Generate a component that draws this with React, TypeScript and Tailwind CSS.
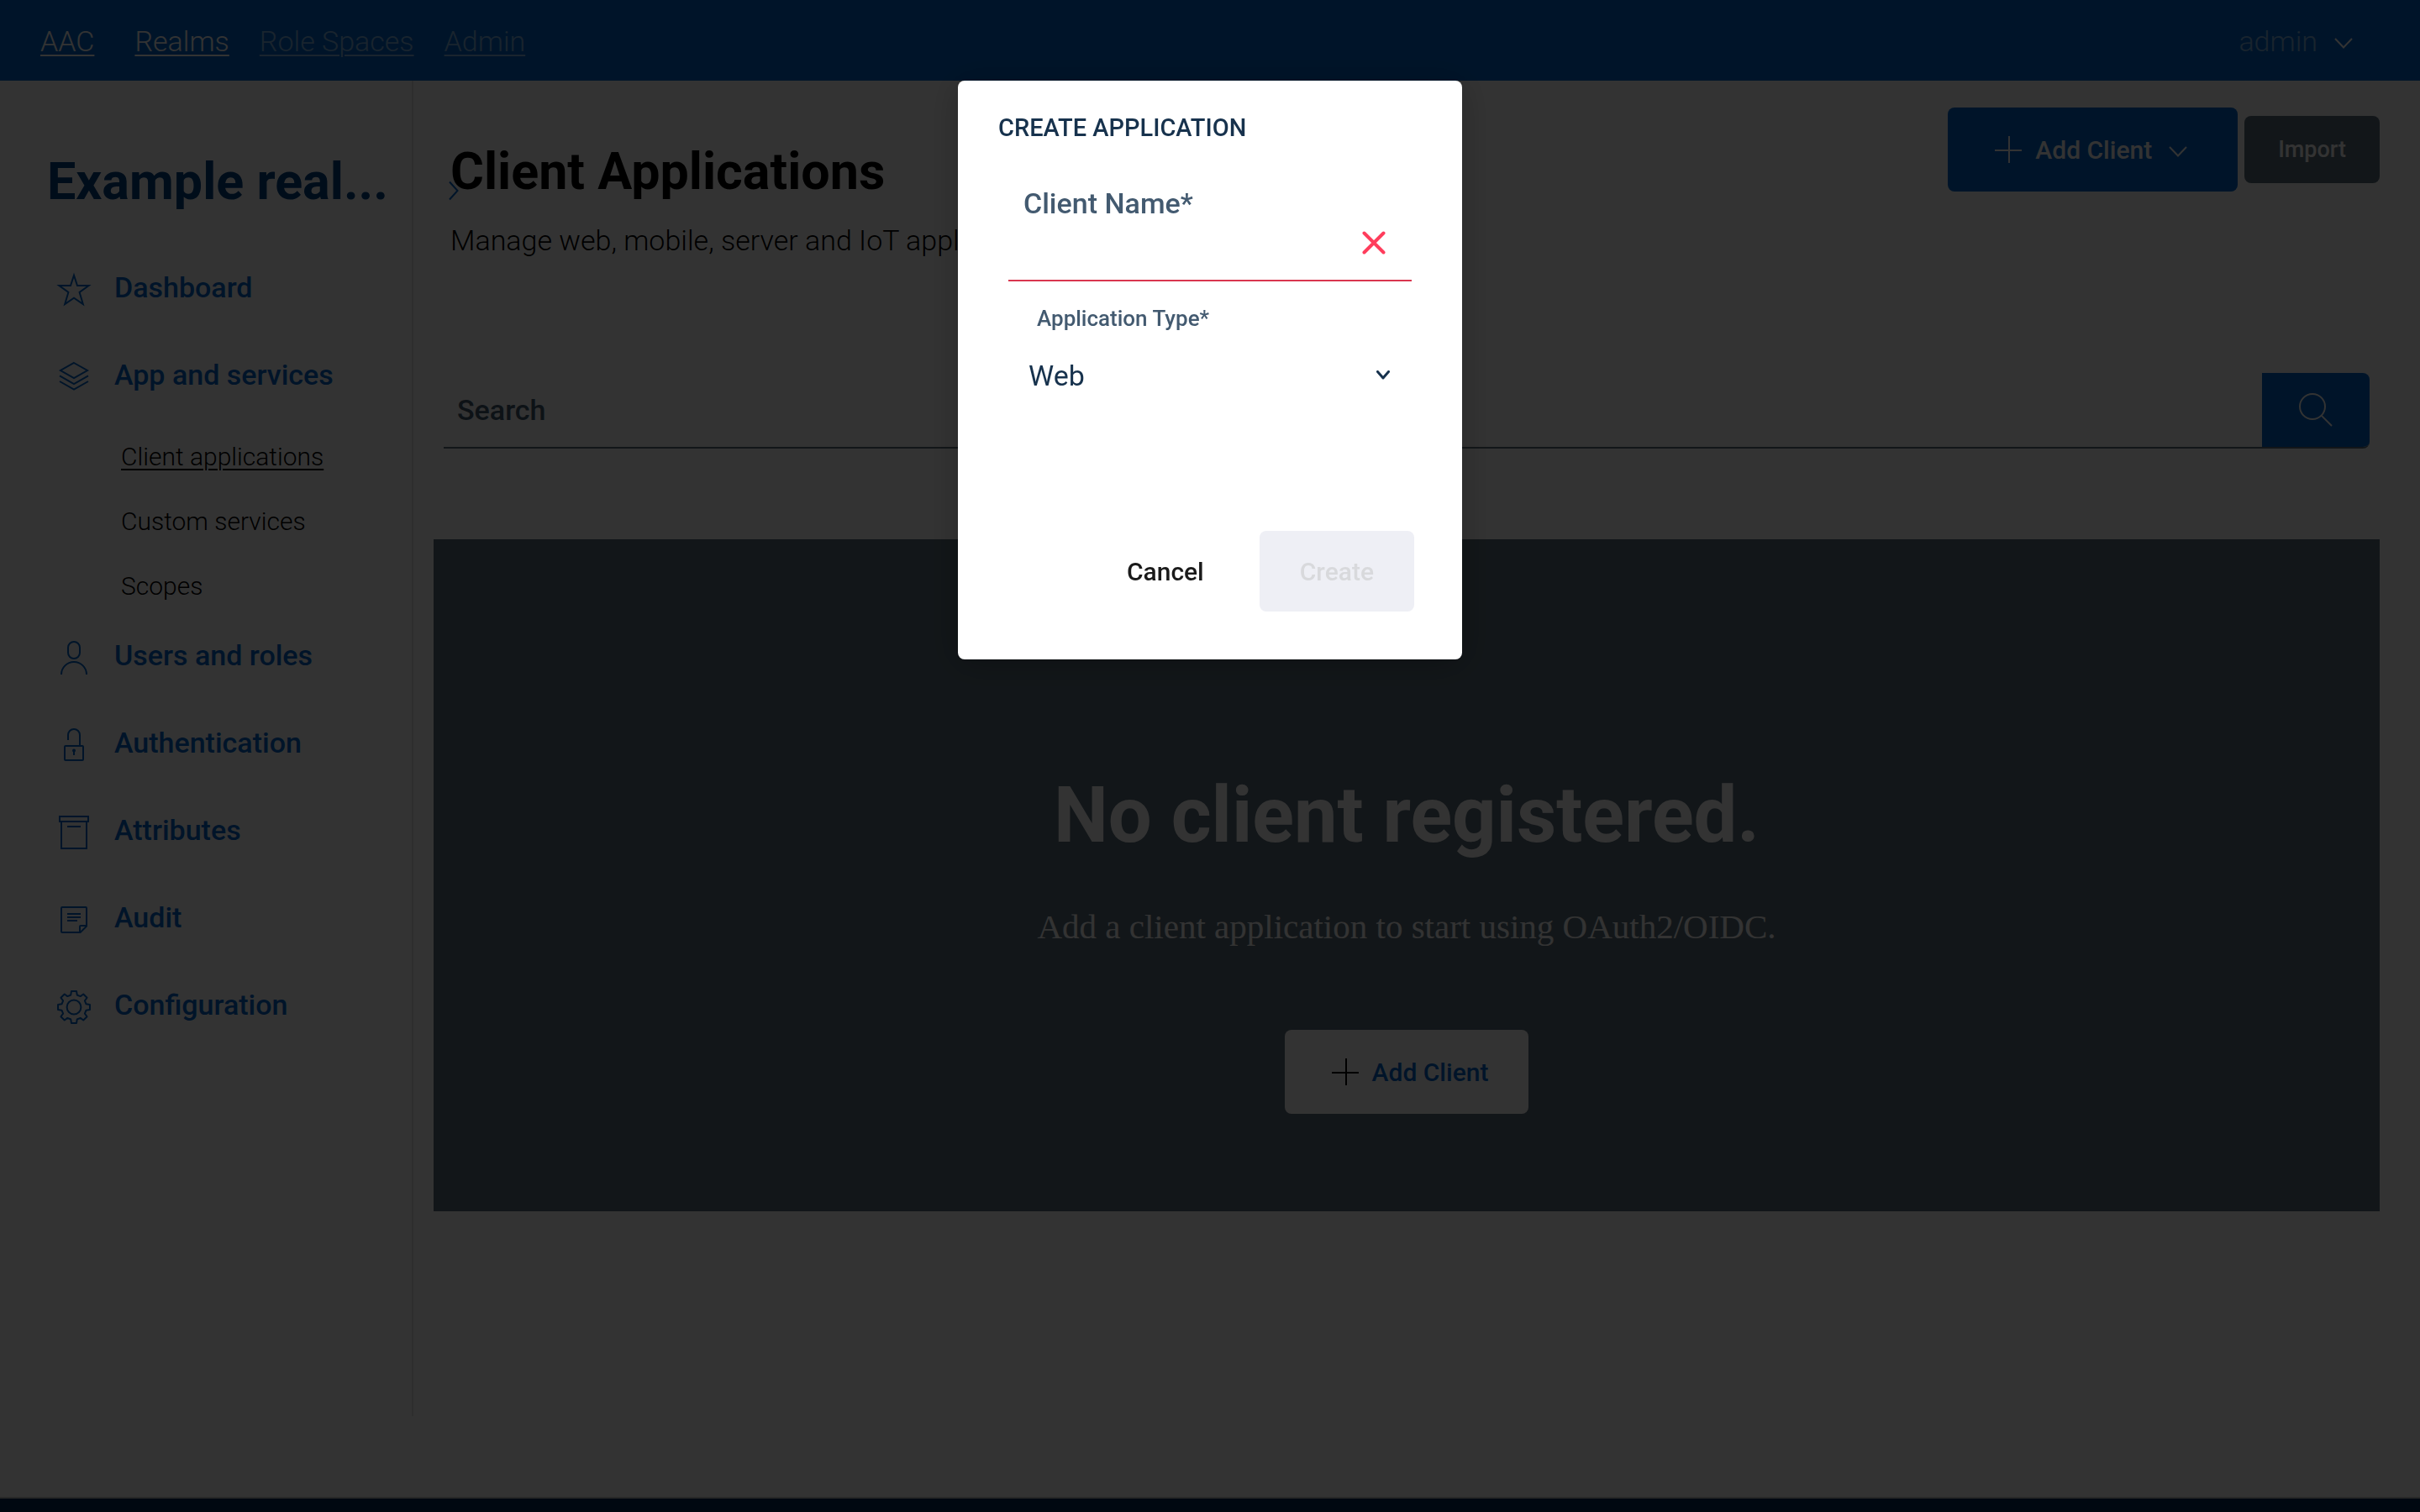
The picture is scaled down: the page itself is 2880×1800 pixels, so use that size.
import type { ReactNode } from "react";

const cn = (...parts: string[]) => parts.join(" ");

function Icon({ className = "", stroke = 1, children }: { className?: string; stroke?: number; children: ReactNode }) {
  return (
    <svg
      viewBox="0 0 24 24"
      fill="none"
      stroke="currentColor"
      strokeWidth={stroke}
      aria-hidden="true"
      className={cn("size-12 shrink-0", className)}
    >
      {children}
    </svg>
  );
}

/* Eight-toothed gear outline centred on 12,12. */
function gearPath() {
  const pts: string[] = [];
  const at = (r: number, a: number) => `${(12 + r * Math.sin(a)).toFixed(2)} ${(12 - r * Math.cos(a)).toFixed(2)}`;
  for (let k = 0; k < 8; k++) {
    const a = (k * Math.PI) / 4;
    pts.push(at(7.5, a - 0.25), at(9.6, a - 0.16), at(9.6, a + 0.16), at(7.5, a + 0.25));
  }
  return `M${pts.join("L")}Z`;
}

const StarIcon = () => (
  <Icon className="mt-1.5">
    <path d="M12 3.4 14 9.5h6.8l-5.5 4 2.1 7L12 16.8l-5.4 3.7 2.1-7-5.5-4H10Z" />
  </Icon>
);
const LayersIcon = () => (
  <Icon className="mt-1.5">
    <path d="M12 3.5 20 8l-8 4.5L4 8Z M3.5 11.2 12 16l8.5-4.8 M3.5 14.5 12 19.3l8.5-4.8" />
  </Icon>
);
const UserIcon = () => (
  <Icon className="mt-1.5">
    <rect x="8.5" y="2.5" width="7" height="10" rx="3.5" />
    <path d="M4.5 22a7.5 7.5 0 0 1 15 0" />
  </Icon>
);
const LockIcon = () => (
  <Icon className="mt-1.5">
    <path d="M8.5 9V6a3.5 3.5 0 0 1 7 0v6.5" />
    <rect x="6.5" y="12.5" width="11" height="8.5" rx=".5" />
    <path d="M12 15v3" />
    <circle cx="12" cy="15.3" r="1" fill="currentColor" stroke="none" />
  </Icon>
);
const BoxIcon = () => (
  <Icon className="mt-1.5">
    <path d="M3.5 2.5h17v3h-17Z M4.5 5.5v16h15v-16 M8 8.5h8" />
  </Icon>
);
const NoteIcon = () => (
  <Icon className="mt-1.5">
    <path d="M5 4.5h14a.5.5 0 0 1 .5.5v10.8l-3.7 3.7H5a.5.5 0 0 1-.5-.5V5a.5.5 0 0 1 .5-.5Z M15.5 19.5V16a.5.5 0 0 1 .5-.5h3.5 M8 8.5h8 M8 10.5h8 M8 12.5h6" />
  </Icon>
);
const GearIcon = () => (
  <Icon className="mt-1.5">
    <circle cx="12" cy="12" r="4.2" />
    <path d={gearPath()} strokeLinejoin="round" />
  </Icon>
);
const PlusIcon = ({ className = "" }: { className?: string }) => (
  <Icon className={className}>
    <path d="M12.5 4v16 M4 12.5h16" />
  </Icon>
);

function ChevronDown({ className = "" }: { className?: string }) {
  return (
    <svg viewBox="0 0 22 13" fill="none" stroke="currentColor" strokeWidth="2" aria-hidden="true" className={cn("w-[22px] h-[13px] shrink-0", className)}>
      <path d="M1 1l10 10.500L21 1" />
    </svg>
  );
}

const topLinks = [
  { label: "Realms", tone: "text-white" },
  { label: "Role Spaces", tone: "text-white/50" },
  { label: "Admin", tone: "text-white/50" },
];

const afterServices = [
  { label: "Users and roles", icon: <UserIcon /> },
  { label: "Authentication", icon: <LockIcon /> },
  { label: "Attributes", icon: <BoxIcon /> },
  { label: "Audit", icon: <NoteIcon /> },
  { label: "Configuration", icon: <GearIcon /> },
];

function NavItem({ label, icon }: { label: string; icon: ReactNode }) {
  return (
    <a href="#" className="flex h-[88px] items-center gap-6 pl-16 text-[34px] font-medium text-[#0066cc]">
      {icon}
      <span>{label}</span>
    </a>
  );
}

function Header() {
  return (
    <header className="flex h-24 items-center bg-[#0066cc] pt-0.5 pl-12 pr-20 text-[34px] font-light text-white">
      <a href="#" className="mr-12 underline decoration-2 underline-offset-4">AAC</a>
      <nav className="flex gap-9">
        {topLinks.map((l) => (
          <a key={l.label} href="#" className={cn("underline decoration-2 underline-offset-4", l.tone)}>
            {l.label}
          </a>
        ))}
      </nav>
      <button type="button" className="ml-auto flex items-center gap-5">
        <span className="text-white/50">admin</span>
        <ChevronDown className="mt-1" />
      </button>
    </header>
  );
}

function Sidebar() {
  return (
    <aside className="relative w-[492px] shrink-0 border-r-2 border-[#e3e4e6] pt-21">
      <h2 className="mb-[46px] pl-14 text-[61px] leading-[72px] font-bold whitespace-nowrap text-[#004080]">Example real...</h2>
      <nav>
        <ul className="flex flex-col gap-4">
          <li><NavItem label="Dashboard" icon={<StarIcon />} /></li>
          <li><NavItem label="App and services" icon={<LayersIcon />} /></li>
        </ul>
        <ul className="mt-[15px] pl-36 text-[30px] leading-[77px] font-light text-black">
          <li><a href="#" className="underline decoration-2 underline-offset-4">Client applications</a></li>
          <li><a href="#">Custom services</a></li>
          <li><a href="#">Scopes</a></li>
        </ul>
        <ul className="flex flex-col gap-4">
          {afterServices.map((i) => (
            <li key={i.label}><NavItem {...i} /></li>
          ))}
        </ul>
      </nav>
      <button type="button" aria-label="Expand sidebar" className="absolute top-[119px] left-full z-10 ml-11 text-[#0066cc]">
        <svg viewBox="0 0 12 24" fill="none" stroke="currentColor" strokeWidth="2" className="h-6 w-3" aria-hidden="true">
          <path d="M1 1.500 10.500 12 1 22.500" />
        </svg>
      </button>
    </aside>
  );
}

function EmptyState() {
  return (
    <section className="mt-[108px] flex flex-col items-center bg-[#5c6f7c] px-8 pt-[275px] pb-[116px] text-white">
      <h2 className="text-[92px] leading-[108px] font-bold">No client registered.</h2>
      <p className="mt-12 font-['Liberation_Serif',serif] text-[41px] leading-[60px]">
        Add a client application to start using OAuth2/OIDC.
      </p>
      <button type="button" className="mt-[93px] flex h-[100px] items-center gap-2 rounded-lg bg-white px-12 text-[30px] font-medium text-[#0066cc]">
        <PlusIcon className="text-black" />
        Add Client
      </button>
    </section>
  );
}

function Content() {
  return (
    <main className="min-w-0 flex-1 pt-8 pr-12 pl-6">
      <div className="flex items-start justify-between">
        <div className="pt-10 pl-5">
          <h1 className="text-[61px] leading-[72px] font-bold text-black">Client Applications</h1>
          <p className="mt-6 text-[34px] leading-[44px] font-light text-black">Manage web, mobile, server and IoT applications.</p>
        </div>
        <div className="flex items-center gap-2 font-medium text-white">
          <button type="button" className="flex h-[100px] items-center rounded-lg bg-[#0066cc] px-12 text-[30px]">
            <PlusIcon className="mr-2" />
            Add Client
            <ChevronDown className="mt-1 mr-3 ml-5" />
          </button>
          <button type="button" className="h-20 rounded-lg bg-[#5c6f7c] px-10 text-[27px]">Import</button>
        </div>
      </div>

      <form className="mx-3 mt-34 flex h-[90px] overflow-hidden rounded-r-lg border-b-2 border-[#5c6f7c]">
        <input
          type="search"
          aria-label="Search"
          placeholder="Search"
          className="min-w-0 flex-1 bg-transparent px-4 text-[34px] font-medium text-[#435a70] outline-none placeholder:text-[#435a70]"
        />
        <button type="button" aria-label="Run search" className="flex w-32 items-center justify-center bg-[#0066cc] text-white">
          <Icon>
            <circle cx="10" cy="10" r="7.5" />
            <path d="m15.3 15.3 6.2 6.2" />
          </Icon>
        </button>
      </form>

      <EmptyState />
    </main>
  );
}

function CreateDialog() {
  return (
    <div className="fixed inset-0 z-20 flex items-start justify-center bg-black/80 pt-24">
      <div role="dialog" aria-modal="true" aria-labelledby="dialog-title" className="w-[600px] rounded-lg bg-white pt-[38px] pb-[57px] text-[#17324d] shadow-[0_4px_40px_rgba(0,0,0,0.25)]">
        <h2 id="dialog-title" className="px-12 text-[29px] leading-9 font-medium">CREATE APPLICATION</h2>
        <form>
          <div className="mx-15 mt-[50px]">
            <label htmlFor="client-name" className="block pl-[18px] text-[34px] leading-[44px] font-medium text-[#435a70]">Client Name*</label>
            <div className="relative">
              <input id="client-name" type="text" className="block h-[71px] w-full border-b-2 border-[#d9364f] bg-transparent px-4 text-[34px] outline-none" />
              <svg viewBox="0 0 28 28" fill="none" stroke="#ff3d5c" strokeWidth="4" strokeLinecap="round" aria-hidden="true" className="absolute top-[11px] right-[31px] size-7">
                <path d="M2.500 2.500l23 23M25.500 2.500l-23 23" />
              </svg>
            </div>
            <label htmlFor="app-type" className="mt-[26px] block pl-[34px] text-[26px] leading-9 font-medium text-[#435a70]">Application Type*</label>
            <div className="relative mt-2.5">
              <select id="app-type" defaultValue="Web" className="h-20 w-full appearance-none bg-transparent px-6 text-[34px] outline-none">
                <option>Web</option>
              </select>
              <svg viewBox="0 0 16 11" fill="none" stroke="currentColor" strokeWidth="3" strokeLinecap="round" strokeLinejoin="round" aria-hidden="true" className="pointer-events-none absolute top-[34px] right-[26px] h-[11px] w-4">
                <path d="M1.500 1.500 8 9l6.500-7.500" />
              </svg>
            </div>
          </div>
          <div className="mt-[145px] mr-[57px] flex justify-end gap-[18px] text-[30px] font-medium">
            <button type="button" className="h-24 px-12 text-[#1a1a1a]">Cancel</button>
            <button type="button" disabled className="h-24 rounded-lg bg-[#eeeff5] px-12 text-[#d8d9dc]">Create</button>
          </div>
        </form>
      </div>
    </div>
  );
}

export default function App() {
  return (
    <div className="flex min-h-screen flex-col bg-white font-['Roboto','Open_Sans',sans-serif]">
      <Header />
      <div className="flex flex-1 pb-24">
        <Sidebar />
        <Content />
      </div>
      <footer className="h-[18px] border-t-2 border-[#c5c7c9] bg-[#002b55]" />
      <CreateDialog />
    </div>
  );
}
